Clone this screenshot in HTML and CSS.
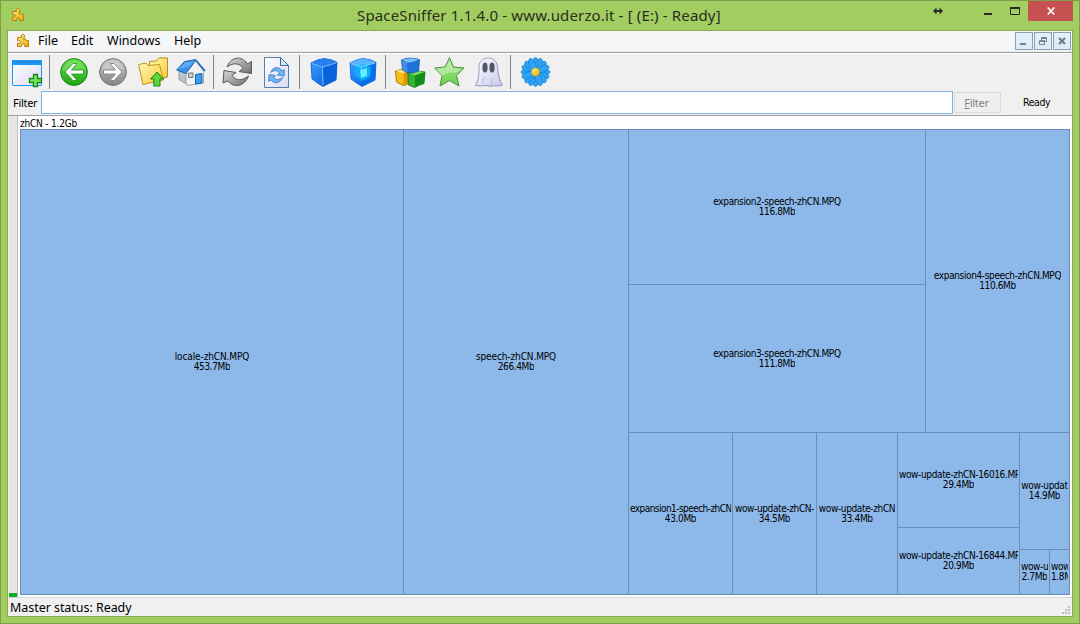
FILE: index.html
```html
<!DOCTYPE html>
<html lang="en">
<head>
<meta charset="utf-8">
<title>SpaceSniffer</title>
<link rel="stylesheet" href="styles.css">
</head>
<body>
<svg class="defs" width="0" height="0" aria-hidden="true">
  <defs>
    <linearGradient id="gold" x1="0" y1="0" x2="1" y2="1"><stop offset="0" stop-color="#fff08a"/><stop offset="1" stop-color="#eea900"/></linearGradient>
    <linearGradient id="green" x1="0" y1="0" x2="0" y2="1"><stop offset="0" stop-color="#6dde52"/><stop offset="1" stop-color="#1aa611"/></linearGradient>
    <linearGradient id="gray" x1="0" y1="0" x2="0" y2="1"><stop offset="0" stop-color="#c9c9c9"/><stop offset="1" stop-color="#858585"/></linearGradient>
    <linearGradient id="arrow" x1="0" y1="0" x2="1" y2="1"><stop offset="0" stop-color="#d8d8d8"/><stop offset="1" stop-color="#717171"/></linearGradient>
    <linearGradient id="folder" x1="0" y1="0" x2="1" y2="1"><stop offset="0" stop-color="#fff9b4"/><stop offset="1" stop-color="#f8c833"/></linearGradient>
    <linearGradient id="pane" x1="0" y1="0" x2="1" y2="1"><stop offset="0" stop-color="#ffffff"/><stop offset="1" stop-color="#dcd9f6"/></linearGradient>
    <linearGradient id="blue" x1="0" y1="0" x2="1" y2="1"><stop offset="0" stop-color="#3ba2ff"/><stop offset="1" stop-color="#0057d8"/></linearGradient>
    <linearGradient id="star" x1="0" y1="0" x2="0" y2="1"><stop offset="0" stop-color="#a4e58f"/><stop offset="1" stop-color="#6fd04e"/></linearGradient>
    <linearGradient id="ghost" x1="0" y1="0" x2="1" y2="1"><stop offset="0" stop-color="#ffffff"/><stop offset="1" stop-color="#c8c7ee"/></linearGradient>
    <g id="puzzle">
      <path d="M1.500 6.500V3.500H5.500C4.800 1.500 5.500.600 7 .600S9.200 1.500 8.500 3.500H8V6C9.500 5 10 5 10.500 6.500H12.500V12.500H8.600C9 10.800 8.400 9.800 7 9.800S5 10.800 5.400 12.500H1.500V9C3.200 9.600 4.300 9.200 4.300 7.800S3 6.100 1.500 6.500Z" fill="url(#gold)" stroke="#b77f10"/>
    </g>
    <g id="cycle">
      <path d="M5 10C8 1 18-2 24 5L25.500 7 29.500 4.500V16.500L17 14.500 21 11.500C17 5 10 6 5 10Z"/>
      <path d="M26.500 19C23 29 12 32 6 24L1 26 2 13.500 14 15.500 10 18.500C14 24 20 24 26.500 19Z"/>
    </g>
  </defs>
</svg>
<div class="window">
  <header class="titlebar">
    <svg class="app-icon" width="14" height="14" viewBox="0 0 14 14"><use href="#puzzle"/></svg>
    <h1 class="title">SpaceSniffer 1.1.4.0 - www.uderzo.it - [ (E:) - Ready]</h1>
    <div class="controls">
      <svg class="swap" width="10" height="8" viewBox="0 0 10 8"><path d="M0 4 3.500.500V3H6.500V.500L10 4 6.500 7.500V5H3.500V7.500Z" fill="#282828"/></svg>
      <svg class="mini" width="8" height="3"><path d="M0 0H8V2H0Z" fill="#282828"/></svg>
      <svg class="maxi" width="10" height="8"><path d="M.5.5H9.500V7.500H.5Z" fill="none" stroke="#282828"/><path d="M0 0H10V2H0Z" fill="#282828"/></svg>
      <div class="close"><svg width="8" height="8" viewBox="0 0 8 8"><path d="M.7.500 7.300 7.500M7.300.500.700 7.500" stroke="#fff" stroke-width="1.700"/></svg></div>
    </div>
  </header>
  <main class="client">
    <nav class="menubar">
      <svg class="menu-icon" width="14" height="14" viewBox="0 0 14 14"><use href="#puzzle"/></svg>
      <span class="menu file">File</span><span class="menu edit">Edit</span><span class="menu windows">Windows</span><span class="menu help">Help</span>
      <div class="child-controls">
        <div class="child-button"><svg width="16" height="16"><path d="M4 10H10V12H4Z" fill="#74838f"/></svg></div>
        <div class="child-button"><svg width="16" height="16" fill="none" stroke="#74838f"><path d="M6.500 7V4.500H11.500V8.500H10M6 5.500H11M4.500 7.500H9.500V11.500H4.500ZM4 8.500H10"/></svg></div>
        <div class="child-button"><svg width="16" height="16"><path d="M5 5 11 11M11 5 5 11" stroke="#6d7c88" stroke-width="2.200"/></svg></div>
      </div>
    </nav>
    <div class="toolbar">
      <svg class="tool" width="40" height="38" viewBox="0 0 40 38">
        <rect x="4.500" y="7.500" width="29" height="25" rx=".5" fill="url(#pane)" stroke="#159cf5"/><path d="M4 7H34V12H4Z" fill="#159cf5"/><path d="M5 8H33V10H5Z" fill="#2889e0"/>
        <path d="M25.500 21.500H29.500V25.500H33.500V29.500H29.500V33.500H25.500V29.500H21.500V25.500H25.500Z" fill="#78e35a" stroke="#15891b" stroke-width="1.300"/>
      </svg>
      <i class="divider"></i>
      <svg class="tool gap-a" width="28" height="28" viewBox="0 0 28 28"><circle cx="14" cy="14" r="13.400" fill="url(#green)" stroke="#168c17"/><path d="M2.500 12A12 12 0 0 1 25.500 12C18 9 10 17 2.500 12Z" fill="#a4f48e" opacity=".35"/><path d="M13 5.500H17L11.500 12H23.500V16H11.500L17 22.500H13L5 14Z" fill="#fff" stroke="#209620" stroke-width=".8"/></svg>
      <svg class="tool gap-b" width="28" height="28" viewBox="0 0 28 28"><circle cx="14" cy="14" r="13.400" fill="url(#gray)" stroke="#737373"/><path d="M2.500 12A12 12 0 0 1 25.500 12C18 9 10 17 2.500 12Z" fill="#fff" opacity=".25"/><path d="M15 5.500H11L16.500 12H4.500V16H16.500L11 22.500H15L23 14Z" fill="#fff" stroke="#777" stroke-width=".8"/></svg>
      <svg class="tool gap-c" width="31" height="30" viewBox="0 0 31 30"><path d="M11.500 4.500 18 4 21 .800 29.500 1V20L16 24 11 20Z" fill="url(#folder)" stroke="#bd8918"/><path d="M.600 7.500 8 6 10 8.500 21.500 7.500 25.500 23 5 27.500Z" fill="url(#folder)" stroke="#c5901f"/><path d="M19 15 25.500 22H22V29H15.800V22H12.500Z" fill="#5fd53d" stroke="#168713"/></svg>
      <svg class="tool gap-d" width="30" height="27" viewBox="0 0 30 27"><path d="M3 10.500 8 8 12 13V26L3 20.500Z" fill="#bcc0c8" stroke="#868b95" stroke-width=".8"/><path d="M10 13 20 2.500 27.500 12V24L12 26.500 10 25Z" fill="#f1f2f5" stroke="#92969f" stroke-width=".8"/><path d="M.600 11 8.500 2.500 20 .600 10.500 14.500Z" fill="#3c90e4" stroke="#155bab" stroke-width=".9"/><path d="M2 10.500 9 3.500 18 2 14 7Z" fill="#6db9fa" opacity=".65"/><path d="M20 1.500 29 12" fill="none" stroke="#246bb8" stroke-width="1.800"/><path d="M20 3 11.500 14" fill="none" stroke="#fff"/><path d="M19.500 15.500 26 14.500V24L19.500 25Z" fill="#3a9bea" stroke="#1466b0"/><path d="M12.500 14H17V18.500H12.500Z" fill="#c6d0da" stroke="#71777e"/></svg>
      <i class="divider gap-e"></i>
      <svg class="tool gap-f" width="31" height="30" viewBox="0 0 31 30"><use href="#cycle" fill="url(#arrow)" stroke="#575757"/></svg>
      <svg class="tool gap-g" width="25" height="31" viewBox="0 0 25 31"><path d="M.5.5H16.500L24.500 8.500V30.500H.5Z" fill="url(#pane)" stroke="#527fae"/><path d="M16.500.500V8.500H24.500Z" fill="#c5eaff" stroke="#446b98"/><use href="#cycle" transform="translate(4 10) scale(.55)" fill="#67b7fa" stroke="#2367b4" stroke-width="1.200"/></svg>
      <i class="divider gap-h"></i>
      <svg class="tool gap-i" width="28" height="29" viewBox="0 0 28 29"><path d="M1 5Q8 1 14 .600 22 1 27 4.500L26 22Q20 25 13 28.400 7 25 2 21Z" fill="url(#blue)" stroke="#0756c4" stroke-width=".8"/><path d="M1 5Q8 1 14 .600 22 1 27 4.500 20 6 12 9Q7 7 1 5Z" fill="#2a7eed"/><path d="M12.500 9 27 4.500 26 22 13 28Z" fill="#0862dc"/><path d="M2 5.500 12.500 9 26 5M12.500 9 13 27" fill="none" stroke="#8bd0ff" stroke-width=".8"/></svg>
      <svg class="tool gap-j" width="28" height="29" viewBox="0 0 28 29"><path d="M1 5Q8 1 14 .600 22 1 27 4.500L26 22Q20 25 13 28.400 7 25 2 21Z" fill="url(#blue)" stroke="#075dce" stroke-width=".8"/><path d="M1.500 5Q8 1 14 1 22 1 26.500 4.500L13 9Z" fill="#55b6ff"/><path d="M12.500 9 27 4.500 26 22 13 28Z" fill="#086ee8"/><path d="M5 9 14 6 22 9 21 19 13 23 6 18Z" fill="#08b8ff" opacity=".8"/><path d="M11 12 18 10V18L12 20Z" fill="#65edff"/><path d="M2 5.500 12.500 9 26 5M12.500 9V14" fill="none" stroke="#78d7ff"/></svg>
      <i class="divider gap-k"></i>
      <svg class="tool gap-l" width="31" height="31" viewBox="0 0 31 31"><g stroke-width=".8" stroke-linejoin="round"><path d="M.500 14Q6 11.500 12.500 13.500V27Q10 28.500 8 28.500L1.500 25Z" fill="#f6bd12" stroke="#9b6a00"/><path d="M1 14Q6 12 12 14L8.500 16.500Z" fill="#ffe680"/><path d="M8.500 16.500 12.500 14.500V27L8.500 28Z" fill="#d99a08"/><path d="M13 16Q20 12.500 30 15L29 26.500Q24 28 19.500 30.500L13.500 28Z" fill="#35b52d" stroke="#11701a"/><path d="M13.500 16Q20 12.500 29.500 15L20 18.500Z" fill="#7bd960"/><path d="M20 18.500 30 15 29 26.500 20 30Z" fill="#128c1c"/><path d="M6.500 3Q14-.500 24.500 2.500L23.500 14Q18 16.500 13 16L7.500 13Z" fill="#1d73d8" stroke="#0850a5"/><path d="M7 3Q14 0 24 2.500 18 5.500 12 5.500Z" fill="#7abdf6"/><path d="M7 3.500 12 5.500 12.500 15.500 7.500 13Z" fill="#418fe4"/></g></svg>
      <svg class="tool gap-m" width="31" height="30" viewBox="0 0 31 30"><path d="M15.500.700 19.500 10 30 11 22.500 18.500 25 29 15.500 23.500 6 29 8 18.500.700 11 11 10Z" fill="url(#star)" stroke="#4a8f40" stroke-linejoin="round"/><path d="M2 11.500 12 10.500 15.500 3 19 11 28 12 21 16Q15 14 8 19Z" fill="#d5f5cb" opacity=".5"/></svg>
      <svg class="tool gap-n" width="28" height="30" viewBox="0 0 28 30"><path d="M4 10C4-2 22-2 22.500 10 23 18 25 24 27.500 28 24 30 21 28 18 29 14 30 11 28 9 28.500 5 30 3 28 .500 28.500 4 22 4 17 4 10Z" fill="url(#ghost)" stroke="#8684aa" stroke-width=".8"/><ellipse cx="10" cy="10.500" rx="2.600" ry="5" fill="#555568"/><ellipse cx="17" cy="10.500" rx="2.600" ry="5" fill="#555568"/><path d="M9 20 7 27M16 21 17 28" stroke="#b9b8e2" fill="none"/></svg>
      <i class="divider gap-o"></i>
      <svg class="tool gap-p" width="31" height="30" viewBox="0 0 31 30"><g fill="#2fa3f5" stroke="#1277d0" stroke-width=".6"><g id="petals"><ellipse cx="15.500" cy="7" rx="3.200" ry="6.500"/><ellipse cx="15.500" cy="23" rx="3.200" ry="6.500"/><ellipse cx="7.500" cy="15" rx="6.500" ry="3.200"/><ellipse cx="23.500" cy="15" rx="6.500" ry="3.200"/></g><use href="#petals" transform="rotate(22.500 15.500 15)"/><use href="#petals" transform="rotate(45 15.500 15)"/><use href="#petals" transform="rotate(67.500 15.500 15)"/></g><circle cx="15.500" cy="15" r="4.200" fill="url(#gold)" stroke="#a98b16" stroke-width=".5"/></svg>
    </div>
    <div class="filterbar">
      <label class="filter-label" for="filter">Filter</label>
      <input id="filter" class="filter-input" type="text">
      <button class="filter-button" disabled><span class="filter-text"><u>F</u>ilter</span></button>
      <span class="ready">Ready</span>
    </div>
    <section class="workspace">
      <div class="gauge"><div class="gauge-fill"></div></div>
      <div class="drive">
        <div class="path">zhCN - 1.2Gb</div>
        <div class="map">
          <div class="cell w382"><span class="loose">locale-zhCN.MPQ</span><span>453.7Mb</span></div>
          <div class="cell w224"><span class="loose">speech-zhCN.MPQ</span><span>266.4Mb</span></div>
          <div class="column fill">
            <div class="row h302">
              <div class="column w296">
                <div class="cell h154"><span>expansion2-speech-zhCN.MPQ</span><span>116.8Mb</span></div>
                <div class="cell low fill"><span>expansion3-speech-zhCN.MPQ</span><span>111.8Mb</span></div>
              </div>
              <div class="cell fill"><span>expansion4-speech-zhCN.MPQ</span><span>110.6Mb</span></div>
            </div>
            <div class="row fill">
              <div class="cell low w103"><span class="tight">expansion1-speech-zhCN</span><span>43.0Mb</span></div>
              <div class="cell low w83"><span>wow-update-zhCN-</span><span>34.5Mb</span></div>
              <div class="cell low w80"><span>wow-update-zhCN</span><span>33.4Mb</span></div>
              <div class="column w121">
                <div class="cell h94"><span>wow-update-zhCN-16016.MP</span><span>29.4Mb</span></div>
                <div class="cell fill"><span>wow-update-zhCN-16844.MP</span><span>20.9Mb</span></div>
              </div>
              <div class="column fill">
                <div class="cell h116"><span>wow-updat</span><span>14.9Mb</span></div>
                <div class="row fill">
                  <div class="cell w29"><span>wow-u</span><span>2.7Mb</span></div>
                  <div class="cell fill"><span>wow</span><span>1.8Mb</span></div>
                </div>
              </div>
            </div>
          </div>
        </div>
      </div>
    </section>
    <footer class="status">
      <span class="status-text">Master status: Ready</span>
      <svg class="grip" width="8" height="8" fill="#bdbdbd"><path d="M6 0h2v2H6zM3 3h2v2H3zM6 3h2v2H6zM0 6h2v2H0zM3 6h2v2H3zM6 6h2v2H6z"/></svg>
    </footer>
  </main>
</div>
</body>
</html>
```
FILE: styles.css
```css
* { box-sizing: border-box; }
body { margin: 0; overflow: hidden; font-family: "Noto Sans", sans-serif; color: #000; }
svg { display: block; flex: none; }
.defs { position: absolute; }
.window { width: 1080px; height: 624px; border: 1px solid #7f9e4c; background: #a2cd60; display: flex; flex-direction: column; }
.titlebar { height: 29px; flex: none; display: flex; align-items: flex-start; }
.app-icon { margin: 7px 0 0 10px; }
.title { margin: 3px 0 0 332px; width: 380px; font-size: 15px; line-height: 22px; font-weight: 400; white-space: nowrap; color: #292d22; letter-spacing: .15px; }
.controls { display: flex; margin-left: auto; padding-right: 6px; }
.swap { margin-top: 6px; }
.mini { margin: 12px 0 0 41px; }
.maxi { margin: 6px 0 0 18px; }
.close { width: 45px; height: 20px; margin-left: 8px; background: #c75050; display: flex; align-items: center; justify-content: center; }
.client { height: 587px; margin: 0 6px; flex: none; border: 1px solid #87aa50; background: #f0f0f0; display: flex; flex-direction: column; }
.menubar { height: 22px; flex: none; background: #f5f6f7; border-bottom: 1px solid #a0a0a0; box-shadow: inset 0 -1px #e9e9e9; display: flex; font-size: 12.500px; line-height: 20px; }
.menu-icon { margin: 3px 0 0 8px; }
.menu { white-space: nowrap; }
.file { margin-left: 8px; width: 33px; }
.edit { width: 36px; }
.windows { width: 67px; }
.help { width: 40px; }
.child-controls { margin: 1px 1px 0 auto; display: flex; gap: 1px; }
.child-button { width: 18px; height: 18px; border: 1px solid #8e9cac; background: linear-gradient(#e5f0fc, #dcebf9); }
.toolbar { height: 38px; flex: none; border-top: 1px solid #fff; padding-bottom: 1px; display: flex; align-items: center; }
.divider { flex: none; width: 1px; height: 34px; background: #858585; margin-left: 1px; }
.gap-a { margin-left: 10px; }
.gap-b { margin-left: 11px; }
.gap-c { margin-left: 11px; }
.gap-d { margin-left: 7px; }
.gap-e { margin-left: 7px; }
.gap-f { margin-left: 8px; }
.gap-g { margin-left: 11px; }
.gap-h { margin-left: 10px; }
.gap-i { margin-left: 10px; }
.gap-j { margin-left: 11px; }
.gap-k { margin-left: 8px; }
.gap-l { margin-left: 9px; }
.gap-m { margin-left: 8px; }
.gap-n { margin-left: 10px; }
.gap-o { margin-left: 7px; }
.gap-p { margin-left: 9px; }
.filterbar { height: 25px; flex: none; border-bottom: 1px solid #a0a0a0; display: flex; font-size: 11px; line-height: 23px; }
.filter-label { width: 33px; padding-left: 5px; letter-spacing: -.3px; }
.filter-input { width: 912px; height: 23px; border: 1px solid #7eb4ea; background: #fff; padding: 0 4px; }
.filter-button { width: 47px; height: 21px; margin: 1px 0 0 1px; padding: 0 2px 0 0; border: 1px solid #d9d9d9; background: #efefef; color: #838383; font: 11px/19px "Noto Sans", sans-serif; letter-spacing: -.3px; }
.ready { margin-left: 22px; font-family: "DejaVu Sans Condensed", sans-serif; font-size: 10.500px; letter-spacing: -.4px; }
.workspace { height: 481px; flex: none; display: flex; background: #fff; }
.gauge { width: 10px; flex: none; background: #e6e6e6; border-left: 1px solid #f0f0f0; border-right: 1px solid #bcbcbc; display: flex; align-items: flex-end; }
.gauge-fill { width: 8px; height: 4px; background: #06b025; }
.drive { margin-left: 2px; width: 1050px; }
.path { height: 13px; font: 10px/16px "DejaVu Sans Condensed", sans-serif; letter-spacing: -.2px; }
.map { width: 1050px; height: 466px; border: 1px solid #688eb4; background: #688eb4; display: flex; gap: 1px; font: 10px/10px "DejaVu Sans Condensed", sans-serif; letter-spacing: -.37px; }
.row, .column { display: flex; gap: 1px; flex: none; min-width: 0; min-height: 0; }
.column { flex-direction: column; }
.cell { flex: none; min-width: 0; min-height: 0; padding: 0 1px 1px; background: #8db9ea; overflow: hidden; display: flex; flex-direction: column; align-items: center; justify-content: center; white-space: nowrap; }
.cell span { display: block; max-width: 100%; overflow: hidden; }
.cell .tight { letter-spacing: -.55px; }
.cell .loose { letter-spacing: -.12px; }
.cell.low { padding-bottom: 0; }
.fill { flex: 1 1 0; }
.w382 { width: 382px; }
.w296 { width: 296px; }
.w224 { width: 224px; }
.w121 { width: 121px; }
.w103 { width: 103px; }
.w83 { width: 83px; }
.w80 { width: 80px; }
.w29 { width: 29px; }
.h302 { height: 302px; }
.h154 { height: 154px; }
.h116 { height: 116px; }
.h94 { height: 94px; }
.status { flex: 1; border-top: 1px solid #d7d7d7; display: flex; justify-content: space-between; font-size: 12.500px; line-height: 20px; }
.status-text { margin-left: 2px; letter-spacing: -.05px; }
.grip { margin: 8px 2px 0 0; }
```
